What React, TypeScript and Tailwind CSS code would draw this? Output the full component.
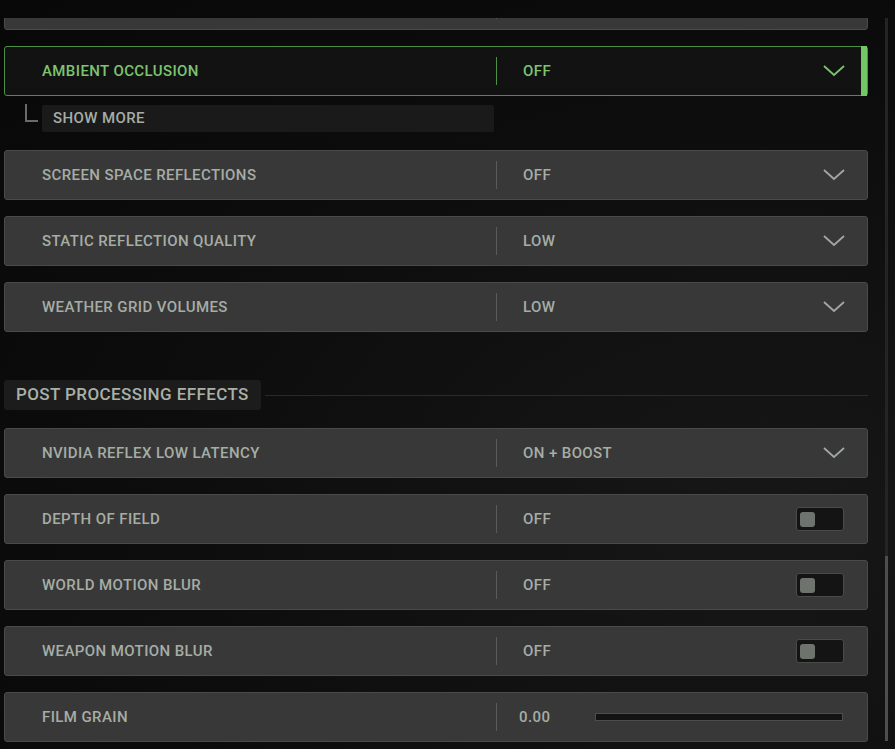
type Row = {
  label: string;
  value: string;
  kind: 'select' | 'toggle' | 'slider';
  active?: boolean;
};

const topRows: Row[] = [
  { label: 'SCREEN SPACE REFLECTIONS', value: 'OFF', kind: 'select' },
  { label: 'STATIC REFLECTION QUALITY', value: 'LOW', kind: 'select' },
  { label: 'WEATHER GRID VOLUMES', value: 'LOW', kind: 'select' },
];

const postRows: Row[] = [
  { label: 'NVIDIA REFLEX LOW LATENCY', value: 'ON + BOOST', kind: 'select' },
  { label: 'DEPTH OF FIELD', value: 'OFF', kind: 'toggle' },
  { label: 'WORLD MOTION BLUR', value: 'OFF', kind: 'toggle' },
  { label: 'WEAPON MOTION BLUR', value: 'OFF', kind: 'toggle' },
  { label: 'FILM GRAIN', value: '0.00', kind: 'slider' },
];

const font = { fontFamily: 'Roboto, "Liberation Sans", sans-serif' };

const Chevron = ({ className }: { className: string }) => (
  <svg width="22" height="12" viewBox="0 0 22 12" fill="none" className={className}>
    <polyline points="1,1 11,10 21,1" stroke="currentColor" strokeWidth="1.8" />
  </svg>
);

const SettingRow = ({ row }: { row: Row }) => {
  const active = row.active;
  const text = active ? 'text-[#7cc46f]' : 'text-[#a6ada5]';
  return (
    <div
      className={
        'flex h-[50px] w-[864px] items-center rounded-[3px] border ' +
        (active
          ? 'border-[#4f8e46] bg-[#121212]'
          : 'border-[#4a4a4a] bg-[#383838]')
      }
    >
      <div className={`w-[491px] pl-[37px] text-[15px] font-medium tracking-[0.4px] ${text}`}>
        {row.label}
      </div>
      <div className={`h-[28px] w-px ${active ? 'bg-[#4f8e46]' : 'bg-[#5a5a5a]'}`} />
      <div className="flex h-full flex-1 items-center">
        {row.kind === 'slider' ? (
          <>
            <div className={`w-[98px] pl-[22px] text-[15px] font-medium tracking-[0.4px] ${text}`}>
              {row.value}
            </div>
            <div className="h-[8px] w-[248px] border border-[#4d4d4d] bg-[#131313]" />
          </>
        ) : (
          <>
            <div className={`flex-1 pl-[26px] text-[15px] font-medium tracking-[0.4px] ${text}`}>
              {row.value}
            </div>
            {row.kind === 'select' && (
              <Chevron
                className={active ? 'mr-[16px] text-[#7cc46f]' : 'mr-[22px] text-[#a0a8a0]'}
              />
            )}
            {row.kind === 'toggle' && (
              <div className="mr-[23px] flex h-[24px] w-[48px] items-center rounded-[3px] border border-[#4a4a4a] bg-[#141414] pl-[3px]">
                <div className="h-[15px] w-[15px] rounded-[3px] bg-[#6e736e]" />
              </div>
            )}
          </>
        )}
        {active && <div className="-my-px h-[50px] w-[6px] self-stretch bg-[#72c766]" />}
      </div>
    </div>
  );
};

export default function App() {
  return (
    <div
      className="flex h-[749px] w-[895px] overflow-hidden bg-[radial-gradient(ellipse_at_85%_70%,#171717_0%,#0c0c0c_60%,#080808_100%)] pt-[18px]"
      style={font}
    >
      <div className="h-[731px] flex-1 overflow-hidden pl-[4px]">
        <div className="-mt-[38px] flex flex-col">
          <SettingRow row={{ label: '', value: '', kind: 'toggle' }} />

          <div className="mt-[16px]">
            <SettingRow row={{ label: 'AMBIENT OCCLUSION', value: 'OFF', kind: 'select', active: true }} />
          </div>

          {/* Show more */}
          <div className="mt-[9px] flex h-[27px] items-start">
            <div className="ml-[21px] -mt-[1px] h-[18px] w-[13px] border-b-2 border-l-2 border-[#6a6a6a]" />
            <div className="ml-[4px] flex h-[27px] w-[452px] items-center rounded-[2px] bg-[#1a1a1a] pl-[11px] text-[15px] font-medium tracking-[0.4px] text-[#a6ada5]">
              SHOW MORE
            </div>
          </div>

          <div className="mt-[18px] flex flex-col gap-[16px]">
            {topRows.map((row) => (
              <SettingRow key={row.label} row={row} />
            ))}
          </div>

          {/* Section header */}
          <div className="mt-[48px] flex h-[30px] w-[864px] items-center">
            <div className="flex h-[30px] items-center rounded-[3px] bg-[#1c1c1c] px-[12px] text-[17px] font-medium tracking-[0.4px] text-[#a9b0a8]">
              POST PROCESSING EFFECTS
            </div>
            <div className="ml-[4px] h-px flex-1 bg-[#2a2a2a]" />
          </div>

          <div className="mt-[18px] flex flex-col gap-[16px]">
            {postRows.map((row) => (
              <SettingRow key={row.label} row={row} />
            ))}
          </div>
        </div>
      </div>

      {/* Scrollbar */}
      <div className="mr-[7px] flex h-[723px] w-[3px] flex-col bg-[#242424]">
        <div className="mt-[538px] h-[185px] w-[3px] bg-[#4e4e4e]" />
      </div>
    </div>
  );
}
